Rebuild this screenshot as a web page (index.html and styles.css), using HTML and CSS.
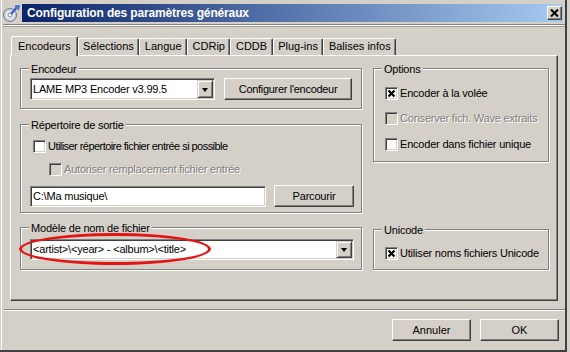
FILE: index.html
```html
<!DOCTYPE html>
<html>
  <head>
    <meta charset="utf-8">
    <link rel="stylesheet" href="styles.css">
  </head>
  <body>
    <div class="window">
      <div class="caption">
        <svg class="app-icon" width="18" height="18" viewBox="0 0 18 18">
          <circle cx="8" cy="11" r="6.5" fill="#c9ced8" stroke="#70788a"/>
          <circle cx="8" cy="11" r="4.5" fill="#e4e8f0"/>
          <circle cx="8" cy="11" r="2" fill="#fff" stroke="#808890"/>
          <path d="M9 10 L15 3" stroke="#2f5fd0" stroke-width="2"/>
          <path d="M13 2 L17 2 L16 6" fill="none" stroke="#2f5fd0" stroke-width="1.5"/>
        </svg>
        <div class="titlebar">
          <span class="title">Configuration des paramètres généraux</span>
          <span class="close">
            <svg width="9" height="8" viewBox="0 0 9 8">
              <path d="M1 0.5 L8 7.5 M8 0.5 L1 7.5" stroke="#000" stroke-width="2"/>
            </svg>
          </span>
        </div>
      </div>
      <div class="caption-rule"></div>

      <div class="dialog">
        <div class="tabs">
          <span class="tab active">Encodeurs</span>
          <span class="tab">Sélections</span>
          <span class="tab">Langue</span>
          <span class="tab">CDRip</span>
          <span class="tab">CDDB</span>
          <span class="tab">Plug-ins</span>
          <span class="tab">Balises infos</span>
        </div>

        <div class="panel">
          <div class="col">
            <div class="group g-encoder">
              <div class="group-title">Encodeur</div>
              <div class="group-body">
                <div class="row">
                  <div class="combo combo-encoder">
                    <span class="combo-text">LAME MP3 Encoder v3.99.5</span>
                    <span class="combo-btn"><i class="arrow"></i></span>
                  </div>
                  <button class="btn btn-config">Configurer l'encodeur</button>
                </div>
              </div>
            </div>

            <div class="group g-output">
              <div class="group-title">Répertoire de sortie</div>
              <div class="group-body">
                <div class="check-row">
                  <span class="checkbox"></span>
                  <span class="narrow">Utiliser répertoire fichier entrée si possible</span>
                </div>
                <div class="check-row sub disabled">
                  <span class="checkbox"></span>
                  <span>Autoriser remplacement fichier entrée</span>
                </div>
                <div class="row path-row">
                  <div class="field">C:\Ma musique\</div>
                  <button class="btn btn-browse">Parcourir</button>
                </div>
              </div>
            </div>

            <div class="group g-model">
              <div class="group-title">Modèle de nom de fichier</div>
              <div class="group-body">
                <div class="combo combo-model">
                  <span class="combo-text">&lt;artist&gt;\&lt;year&gt; - &lt;album&gt;\&lt;title&gt;</span>
                  <span class="combo-btn"><i class="arrow"></i></span>
                </div>
              </div>
              <div class="highlight"></div>
            </div>
          </div>

          <div class="col col-right">
            <div class="group g-options">
              <div class="group-title">Options</div>
              <div class="group-body">
                <div class="check-row">
                  <span class="checkbox checked"><svg width="9" height="9" viewBox="0 0 9 9"><path d="M1.5 1.5 L7.5 7.5 M7.5 1.5 L1.5 7.5" stroke="#000" stroke-width="2.2"/></svg></span>
                  <span>Encoder à la volée</span>
                </div>
                <div class="check-row disabled second">
                  <span class="checkbox"></span>
                  <span>Conserver fich. Wave extraits</span>
                </div>
                <div class="check-row third">
                  <span class="checkbox"></span>
                  <span>Encoder dans fichier unique</span>
                </div>
              </div>
            </div>

            <div class="group g-unicode">
              <div class="group-title">Unicode</div>
              <div class="group-body">
                <div class="check-row">
                  <span class="checkbox checked"><svg width="9" height="9" viewBox="0 0 9 9"><path d="M1.5 1.5 L7.5 7.5 M7.5 1.5 L1.5 7.5" stroke="#000" stroke-width="2.2"/></svg></span>
                  <span>Utiliser noms fichiers Unicode</span>
                </div>
              </div>
            </div>
          </div>
        </div>
      </div>

      <div class="sep"></div>
      <div class="actions">
        <button class="btn btn-action">Annuler</button>
        <button class="btn btn-action">OK</button>
      </div>
    </div>
  </body>
</html>
```

FILE: styles.css
```css
body {
  margin: 0;
  background-color: #d4d0c8;
  font-family: "Liberation Sans", Arial, sans-serif;
  font-size: 11px;
  line-height: 13px;
  color: #000;
}
.window {
  width: 567px;
  height: 352px;
  box-sizing: border-box;
  border-right: 2px solid #404040;
  border-bottom: 2px solid #404040;
  box-shadow: inset 1px 0 0 #d4d0c8, inset 2px 0 0 #fff;
}

/* title bar */
.caption {
  display: flex;
  height: 22px;
  padding: 4px 2px 0 2px;
  box-sizing: border-box;
}
.app-icon {
  margin-right: 2px;
  flex: none;
}
.titlebar {
  flex: 1;
  height: 18px;
  display: flex;
  align-items: center;
  justify-content: space-between;
  padding-left: 5px;
  background: linear-gradient(to right, #0a246a, #a6caf0);
}
.title {
  color: #fff;
  font-weight: bold;
  font-size: 12px;
  letter-spacing: -0.15px;
}
.close {
  width: 15px;
  height: 14px;
  box-sizing: border-box;
  margin-right: 1px;
  display: flex;
  align-items: center;
  justify-content: center;
  background-color: #d4d0c8;
  border: 1px solid;
  border-color: #fff #404040 #404040 #fff;
  box-shadow: inset -1px -1px 0 #808080;
}
.caption-rule {
  height: 1px;
  margin: 2px 0 0 3px;
  background-color: #fff;
  border-top: 1px solid #808080;
  border-bottom: 1px solid #a09c94;
}

/* tabs */
.dialog {
  padding-left: 10px;
}
.tabs {
  display: flex;
  align-items: flex-end;
  margin-top: 9px;
  padding-left: 3px;
}
.tab {
  height: 17px;
  box-sizing: border-box;
  padding: 1px 4.5px 3px;
  border-top: 1px solid #fff;
  border-left: 1px solid #fff;
  border-right: 1px solid #404040;
  box-shadow: inset -1px 0 0 #808080;
  border-radius: 2px 2px 0 0;
  white-space: nowrap;
}
.tab.active {
  height: 20px;
  padding: 3px 6px 4px;
  margin: 0 0 -1px -2px;
  background-color: #d4d0c8;
  position: relative;
  z-index: 1;
}

.panel {
  width: 548px;
  height: 246px;
  box-sizing: border-box;
  padding: 12px 8px 0 9px;
  border: 1px solid;
  border-color: #fff #404040 #404040 #fff;
  box-shadow: inset -1px -1px 0 #808080;
  display: grid;
  grid-template-columns: 342px 176px;
  column-gap: 11px;
  align-items: start;
  letter-spacing: -0.2px;
}
.col {
  display: flex;
  flex-direction: column;
}
.col-right {
  height: 202px;
  justify-content: space-between;
}

/* group boxes */
.group {
  border: 1px solid #808080;
  box-shadow: 1px 1px 0 #fff, inset 1px 1px 0 #fff;
  position: relative;
}
.group-title {
  display: table;
  margin: -6px 0 -7px 8px;
  padding: 0 2px;
  background-color: #d4d0c8;
}
.g-encoder .group-body {
  padding: 9px 7px 8px 9px;
}
.g-output {
  margin-top: 15px;
}
.g-output .group-body {
  padding: 13px 7px 5px 9px;
}
.g-model {
  margin-top: 14px;
}
.g-model .group-body {
  padding: 11px 7px 9px 9px;
}
.g-options .group-body {
  padding: 16px 8px 9px 11px;
}
.g-unicode .group-body {
  padding: 15px 8px 8px 11px;
}

.row {
  display: flex;
  align-items: center;
}
.check-row {
  display: flex;
  align-items: center;
  height: 16px;
  gap: 2px;
  white-space: nowrap;
}
.narrow {
  letter-spacing: -0.55px;
}
.g-output .check-row {
  margin-left: 3px;
}
.g-output .check-row.sub {
  margin-left: 19px;
  margin-top: 7px;
}
.check-row.second {
  margin-top: 9px;
}
.check-row.third {
  margin-top: 10px;
}
.disabled {
  color: #808080;
  text-shadow: 1px 1px 0 #fff;
}

.checkbox {
  width: 13px;
  height: 13px;
  box-sizing: border-box;
  flex: none;
  display: flex;
  align-items: center;
  justify-content: center;
  background-color: #fff;
  border: 1px solid;
  border-color: #808080 #fff #fff #808080;
  box-shadow: inset 1px 1px 0 #404040, inset -1px -1px 0 #d4d0c8;
}
.disabled .checkbox {
  background-color: #d4d0c8;
}

/* combo boxes and fields */
.combo, .field {
  display: flex;
  align-items: stretch;
  box-sizing: border-box;
  padding: 1px;
  background-color: #fff;
  border: 1px solid;
  border-color: #808080 #fff #fff #808080;
  box-shadow: inset 1px 1px 0 #404040, inset -1px -1px 0 #d4d0c8;
}
.combo-encoder {
  width: 185px;
  height: 22px;
}
.combo-model {
  height: 21px;
}
.combo-text {
  flex: 1;
  padding: 0 1px;
  display: flex;
  align-items: center;
  white-space: nowrap;
}
.combo-btn {
  width: 16px;
  box-sizing: border-box;
  display: flex;
  align-items: center;
  justify-content: center;
  background-color: #d4d0c8;
  border: 1px solid;
  border-color: #d4d0c8 #404040 #404040 #d4d0c8;
  box-shadow: inset 1px 1px 0 #fff, inset -1px -1px 0 #808080;
}
.arrow {
  width: 0;
  height: 0;
  border-left: 3.5px solid transparent;
  border-right: 3.5px solid transparent;
  border-top: 4px solid #000;
  margin-top: 1px;
}
.field {
  width: 236px;
  height: 21px;
  align-items: center;
  padding: 1px 2px;
}
.path-row {
  margin-top: 8px;
}

/* buttons */
.btn {
  height: 22px;
  padding: 0;
  font-family: "Liberation Sans", Arial, sans-serif;
  font-size: 11px;
  letter-spacing: inherit;
  color: #000;
  background-color: #d4d0c8;
  border: 1px solid;
  border-color: #fff #404040 #404040 #fff;
  box-shadow: inset -1px -1px 0 #808080;
}
.btn-config {
  width: 128px;
  margin-left: 9px;
  letter-spacing: -0.3px;
}
.btn-browse {
  width: 80px;
  margin-left: 8px;
}

.highlight {
  position: absolute;
  left: -2px;
  top: 5px;
  width: 192px;
  height: 32px;
  box-sizing: border-box;
  border: 3px solid #e41414;
  border-radius: 50%;
}

.sep {
  margin: 8px 0 0 4px;
  border-top: 1px solid #808080;
  border-bottom: 1px solid #fff;
}
.actions {
  display: flex;
  justify-content: flex-end;
  gap: 9px;
  padding: 8px 6px 0 0;
}
.btn-action {
  width: 79px;
}
```
